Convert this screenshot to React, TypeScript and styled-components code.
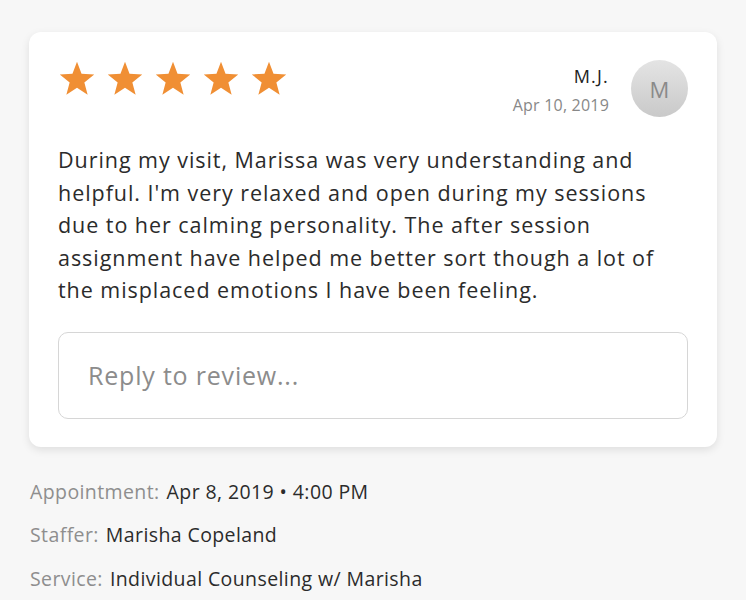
import styled, { createGlobalStyle } from "styled-components";

const Global = createGlobalStyle`
  body {
    margin: 0;
    background: #f7f7f7;
    font-family: "Open Sans", "Lato", sans-serif;
  }
`;

const Page = styled.div`
  padding: 32px 29px 0 29px;
`;

const Card = styled.div`
  width: 688px;
  box-sizing: border-box;
  background: #fff;
  border-radius: 12px;
  box-shadow: 0 3px 8px rgba(0, 0, 0, 0.1);
  padding: 28px 29px 28px 29px;
`;

const Header = styled.div`
  display: flex;
  justify-content: space-between;
  align-items: flex-start;
`;

const Stars = styled.div`
  display: flex;
  gap: 10px;
  padding-top: 1px;
`;

const Author = styled.div`
  display: flex;
  align-items: flex-start;
  gap: 22px;
`;

const AuthorText = styled.div`
  display: flex;
  flex-direction: column;
  align-items: flex-end;
  padding-top: 2px;
`;

const Name = styled.div`
  font-size: 18px;
  letter-spacing: 1.2px;
  color: #222;
  line-height: 28px;
`;

const DateText = styled.div`
  font-size: 16px;
  letter-spacing: 0.2px;
  color: #888;
  line-height: 30px;
`;

const Avatar = styled.div`
  width: 57px;
  height: 57px;
  border-radius: 50%;
  background: linear-gradient(#e4e4e4, #c9c9c9);
  color: #8a8a8a;
  font-size: 22px;
  display: flex;
  align-items: center;
  justify-content: center;
`;

const Body = styled.p`
  margin: 24px 0 0 0;
  font-size: 21.5px;
  letter-spacing: 0.95px;
  line-height: 32.5px;
  color: #2b2b2b;
`;

const Reply = styled.div`
  margin-top: 25px;
  height: 87px;
  box-sizing: border-box;
  border: 1.5px solid #d6d6d6;
  border-radius: 10px;
  display: flex;
  align-items: center;
  padding-left: 29px;
  font-size: 25px;
  letter-spacing: 0.8px;
  color: #8c8c8c;
`;

const Meta = styled.div`
  padding: 23px 0 0 1px;
`;

const MetaRow = styled.div`
  font-size: 19.5px;
  letter-spacing: 0.4px;
  line-height: 43.5px;
  color: #2b2b2b;
`;

const Label = styled.span`
  color: #8e8e8e;
  margin-right: 7px;
`;

const Star = () => (
  <svg width="38" height="36" viewBox="0 0 24 23">
    <polygon
      points="12,0.5 14.9,8.2 23,8.6 16.7,13.7 18.8,21.6 12,17.1 5.2,21.6 7.3,13.7 1,8.6 9.1,8.2"
      fill="#f08f34"
    />
  </svg>
);

const App = () => {
  const meta = [
    ["Appointment:", "Apr 8, 2019 \u2022 4:00 PM"],
    ["Staffer:", "Marisha Copeland"],
    ["Service:", "Individual Counseling w/ Marisha"],
  ];
  return (
    <>
      <Global />
      <Page>
        <Card>
          <Header>
            <Stars>
              {[0, 1, 2, 3, 4].map((i) => (
                <Star key={i} />
              ))}
            </Stars>
            <Author>
              <AuthorText>
                <Name>M.J.</Name>
                <DateText>Apr 10, 2019</DateText>
              </AuthorText>
              <Avatar>M</Avatar>
            </Author>
          </Header>
          <Body>
            During my visit, Marissa was very understanding and helpful. I'm very
            relaxed and open during my sessions due to her calming personality. The
            after session assignment have helped me better sort though a lot of the
            misplaced emotions I have been feeling.
          </Body>
          <Reply>Reply to review...</Reply>
        </Card>
        <Meta>
          {meta.map(([l, v]) => (
            <MetaRow key={l}>
              <Label>{l}</Label>
              {v}
            </MetaRow>
          ))}
        </Meta>
      </Page>
    </>
  );
};

export default App;
